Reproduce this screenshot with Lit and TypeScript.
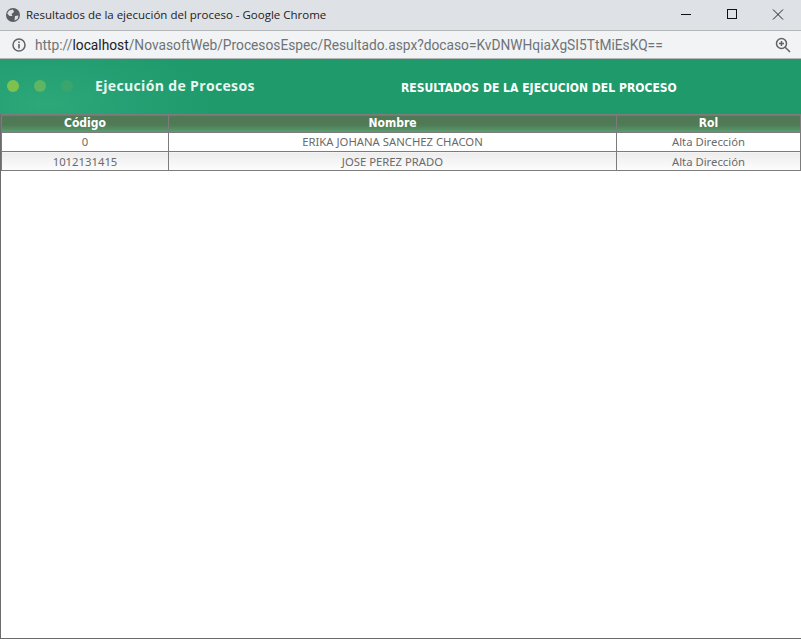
import { LitElement, html, css } from "lit";
import { customElement } from "lit/decorators.js";

@customElement("app-root")
export class AppRoot extends LitElement {
  static styles = css`
    :host { display: block; width: 801px; height: 639px; overflow: hidden; background: #fff; }
    .window { box-sizing: border-box; height: 639px; display: flex; flex-direction: column; border-left: 1px solid #6b6b6b; border-bottom: 1px solid #6b6b6b; }
    .title { height: 30px; background: #dee1e6; display: flex; align-items: center; font: 11.5px "Open Sans", sans-serif; color: #222; margin-left: -1px; padding-left: 6px; flex: none; }
    .title .text { margin-left: 6px; flex: 1; margin-bottom: 1px; }
    .globe { width: 14px; height: 14px; }
    .winbtns { display: flex; align-items: center; }
    .winbtns svg { width: 46px; height: 30px; display: block; }
    .url { height: 27px; background: #f1f3f4; border-top: 1px solid #b5b6b8; border-bottom: 1px solid #b5b6b8; display: flex; align-items: center; margin-left: -1px; padding-left: 12px; font: 13.75px Roboto, sans-serif; color: #6f7378; flex: none; }
    .url .addr { margin-left: 9px; flex: 1; white-space: nowrap; }
    .url b { font-weight: 400; color: #202124; }
    .info { width: 14px; height: 14px; }
    .zoom { width: 16px; height: 16px; margin-right: 10px; }
    .banner { height: 55px; flex: none; background: radial-gradient(ellipse 170px 70px at 45px 45px, #2da878 0%, #25a074 50%, #1e9a6b 100%); display: flex; align-items: center; margin-left: -1px; }
    .dots { display: flex; gap: 15px; margin-left: 7px; width: 88px; flex: none; margin-top: -2px; }
    .dot { width: 12px; height: 12px; border-radius: 50%; }
    .d1 { background: #7fc14f; }
    .d2 { background: #5fb562; }
    .d3 { background: #3aa56d; }
    .brand { font: 700 14px "Open Sans", sans-serif; color: #e8f6f0; width: 300px; flex: none; margin-top: -3px; letter-spacing: 0.35px; }
    .heading { font: 700 12px "DejaVu Sans Condensed", "DejaVu Sans", sans-serif; color: #fff; margin-left: 6px; white-space: nowrap; margin-top: 2px; letter-spacing: 0.03px; }
    table { border-collapse: collapse; table-layout: fixed; width: 799px; font: 11.3px "Noto Sans", sans-serif; flex: none; }
    th, td { border: 1px solid #7c7c7c; padding: 0; text-align: center; white-space: nowrap; overflow: hidden; }
    th { height: 17px; font: 700 12px "DejaVu Sans Condensed", "DejaVu Sans", sans-serif; color: #fff; background: linear-gradient(#4f7a55 0%, #4f7a55 55%, #5aa070 100%); line-height: 17px; }
    td { height: 18px; color: #6a6a6a; line-height: 18px; }
    tr.alt td { background: linear-gradient(#ececec, #fdfdfd); height: 17px; line-height: 17px; padding-top: 1px; }
  `;

  render() {
    return html`
      <div class="window">
        <div class="title">
          <svg class="globe" viewBox="0 0 14 14"><circle cx="7" cy="7" r="7" fill="#5a5d62"/><path d="M3 2.5 L7 1.5 L8 4 L5.5 6 L6.5 8 L3.5 8 L1.2 5.5Z M9 8 L12.5 7.5 L11.5 11 L8.5 12.5Z" fill="#dee1e6"/></svg>
          <span class="text">Resultados de la ejecución del proceso - Google Chrome</span>
          <div class="winbtns">
            <svg viewBox="0 0 46 30"><path d="M18 14.5 H28" stroke="#111" stroke-width="1"/></svg>
            <svg viewBox="0 0 46 30"><rect x="18.5" y="9.5" width="9" height="9" fill="none" stroke="#111"/></svg>
            <svg viewBox="0 0 46 30"><path d="M18 9.5 L28 19.5 M28 9.5 L18 19.5" stroke="#222" fill="none"/></svg>
          </div>
        </div>
        <div class="url">
          <svg class="info" viewBox="0 0 14 14"><circle cx="7" cy="7" r="6" fill="none" stroke="#5f6368" stroke-width="1.5"/><path d="M7 6 V10.5 M7 3.4 V5" stroke="#5f6368" stroke-width="1.6"/></svg>
          <span class="addr">http://<b>localhost</b>/NovasoftWeb/ProcesosEspec/Resultado.aspx?docaso=KvDNWHqiaXgSI5TtMiEsKQ==</span>
          <svg class="zoom" viewBox="0 0 16 16"><circle cx="6.5" cy="6.5" r="5" fill="none" stroke="#5f6368" stroke-width="1.5"/><path d="M10.2 10.2 L15 15 M4 6.5 H9 M6.5 4 V9" stroke="#5f6368" stroke-width="1.5"/></svg>
        </div>
        <div class="banner">
          <div class="dots"><span class="dot d1"></span><span class="dot d2"></span><span class="dot d3"></span></div>
          <div class="brand">Ejecución de Procesos</div>
          <div class="heading">RESULTADOS DE LA EJECUCION DEL PROCESO</div>
        </div>
        <table>
          <colgroup><col style="width:167px"/><col style="width:448px"/><col style="width:184px"/></colgroup>
          <thead><tr><th>Código</th><th>Nombre</th><th>Rol</th></tr></thead>
          <tbody>
            <tr><td>0</td><td>ERIKA JOHANA SANCHEZ CHACON</td><td>Alta Dirección</td></tr>
            <tr class="alt"><td>1012131415</td><td>JOSE PEREZ PRADO</td><td>Alta Dirección</td></tr>
          </tbody>
        </table>
      </div>
    `;
  }
}
